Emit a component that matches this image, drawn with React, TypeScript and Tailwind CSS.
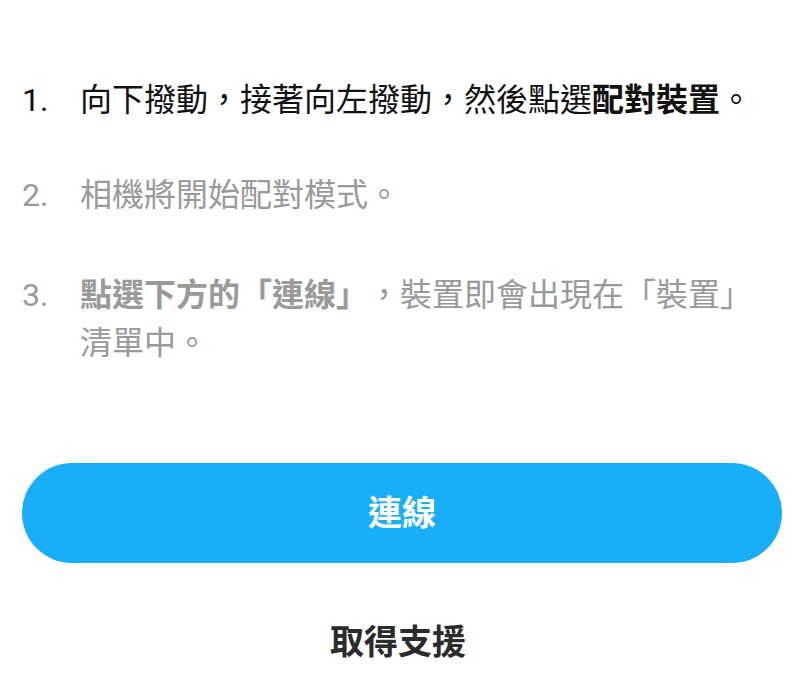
const font = { fontFamily: '"Roboto", "Noto Sans CJK TC", sans-serif' };

type Step = { n: string; active?: boolean; body: React.ReactNode };

const steps: Step[] = [
  {
    n: "1.",
    active: true,
    body: (
      <>
        向下撥動，接著向左撥動，然後點選<b className="font-bold">配對裝置</b>。
      </>
    ),
  },
  { n: "2.", body: <>相機將開始配對模式。</> },
  {
    n: "3.",
    body: (
      <>
        <b className="font-bold">點選下方的「連線」</b>，裝置即會出現在「裝置」清單中。
      </>
    ),
  },
];

export default function App() {
  return (
    <div
      lang="zh-Hant-TW"
      className="h-[690px] w-[796px] bg-white [text-spacing-trim:space-all]"
      style={font}
    >
      <ol className="flex flex-col pt-[76px]">
        {steps.map((s, i) => (
          <li
            key={s.n}
            className={`flex items-baseline pl-[22px] pr-[20px] text-[32px] leading-[48px] ${
              s.active ? "text-[#111]" : "text-[#9a9a9a]"
            } ${i === 1 ? "mt-[47px]" : ""} ${i === 2 ? "mt-[52px]" : ""}`}
          >
            <span className="w-[58px] shrink-0">{s.n}</span>
            <span className="min-w-0 flex-1">{s.body}</span>
          </li>
        ))}
      </ol>

      <button className="ml-[22px] mt-[96px] flex h-[100px] w-[760px] items-center justify-center rounded-full bg-[#19aff8] text-[34px] font-bold text-white">
        連線
      </button>

      <div className="mt-[55px] text-center text-[34px] font-bold leading-[48px] text-[#2b2b2b]">
        取得支援
      </div>
    </div>
  );
}
